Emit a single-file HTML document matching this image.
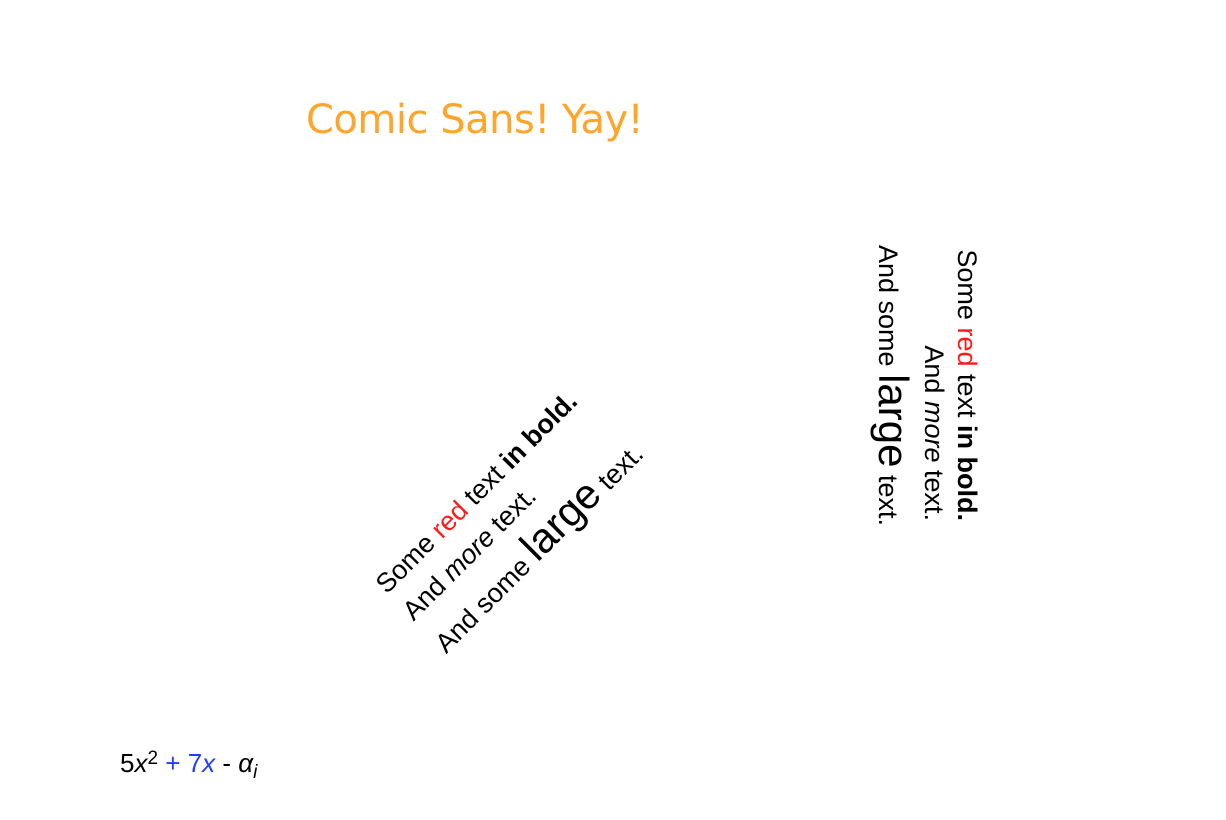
<!DOCTYPE html>
<html><head><meta charset="utf-8"><style>
html,body{margin:0;padding:0;background:#fff;width:1226px;height:820px;overflow:hidden;position:relative}
.t{position:absolute;font-family:"Liberation Sans",Arial,sans-serif;color:#000;white-space:nowrap}
.r{color:#ff1a1a}
.comic{position:absolute;left:306px;top:97px;font-family:"Comic Sans MS","DejaVu Sans",sans-serif;font-size:40px;color:#ffa52a;white-space:nowrap;letter-spacing:-0.5px}
</style></head><body>
<div class="comic">Comic Sans! Yay!</div>

<div class="t" style="left:367px;top:575px;font-size:27px;line-height:38px;transform:rotate(-45deg);transform-origin:0 0;text-align:left">
<div>Some <span class="r">red</span> text <b>in bold.</b></div>
<div>And <i>more</i> text.</div>
<div style="line-height:44px">And some <span style="font-size:42px">large</span> text.</div>
</div>

<div class="t" style="left:983px;top:245px;width:276px;font-size:27px;line-height:33px;transform:rotate(90deg);transform-origin:0 0;text-align:right">
<div>Some <span class="r">red</span> text <b>in bold.</b></div>
<div>And <i>more</i> text.</div>
<div style="line-height:48px">And some <span style="font-size:42px">large</span> text.</div>
</div>

<div class="t" style="left:120px;top:748px;font-size:26px;line-height:30px">5<i>x</i><sup style="font-size:19px;vertical-align:8px;line-height:0">2</sup> <span style="color:#1f3dff">+ 7<i>x</i></span> - <i>α<sub style="font-size:19px;vertical-align:-6px;line-height:0">i</sub></i></div>
</body></html>
